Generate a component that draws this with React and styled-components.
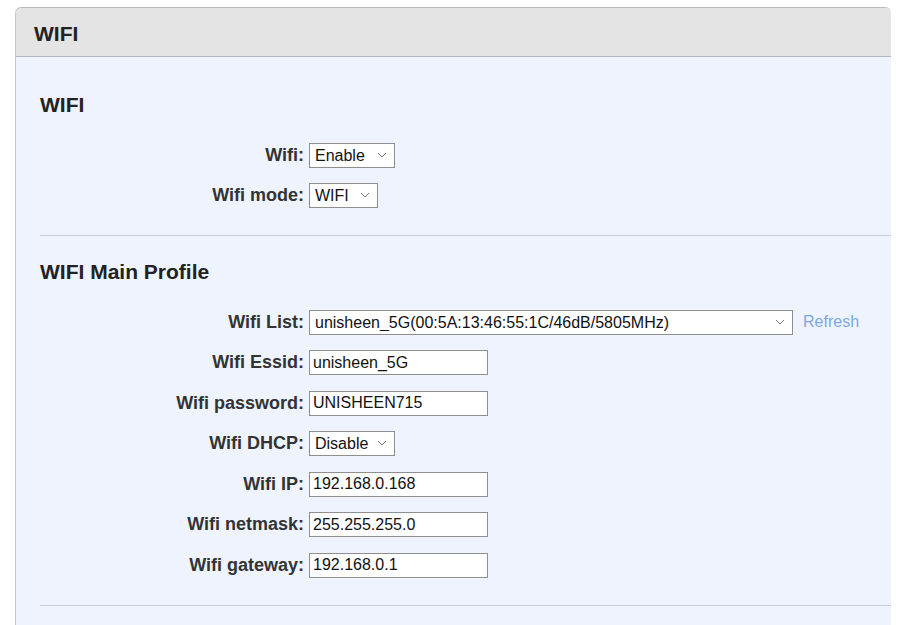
import React from 'react';
import styled, { createGlobalStyle } from 'styled-components';

const GlobalStyle = createGlobalStyle`
  html, body {
    margin: 0;
    padding: 0;
    background: #fff;
  }
  body {
    font-family: "Liberation Sans", Arial, sans-serif;
    color: #333;
    overflow: hidden;
  }
`;

const Page = styled.div`
  padding: 7px 26px 0 15px;
`;

const Panel = styled.div`
  border-top: 1px solid #b8bac4;
  border-left: 1px solid #c4c7d2;
  border-radius: 6px 6px 0 0;
  overflow: hidden;
  background: #eef3fe;
  height: 640px;
`;

const PanelHeader = styled.div`
  height: 49px;
  display: flex;
  align-items: center;
  padding: 3px 0 0 18px;
  box-sizing: border-box;
  background: #e4e4e4;
  border-bottom: 1px solid #b3b5c3;
  font-size: 21px;
  font-weight: bold;
  color: #222;
`;

const PanelBody = styled.div`
  padding: 12px 0 0 24px;
`;

const Section = styled.div`
  padding: 24px 0 19px;
  border-bottom: 1px solid #c9cdd8;
`;

const SectionTitle = styled.h3`
  margin: 0 0 18px;
  height: 24px;
  line-height: 24px;
  font-size: 21px;
  font-weight: bold;
  color: #222;
`;

const Row = styled.div`
  display: flex;
  align-items: center;
  height: 40.5px;
`;

const Label = styled.label`
  width: 264px;
  margin-right: 5px;
  text-align: right;
  font-size: 18px;
  font-weight: bold;
  color: #333;
  white-space: nowrap;
`;

const TextInput = styled.input`
  box-sizing: border-box;
  width: 179px;
  height: 25px;
  margin: 0;
  padding: 0 3px;
  border: 1px solid #8f8f8f;
  background: #fff;
  font-family: "Liberation Sans", Arial, sans-serif;
  font-size: 16px;
  color: #111;
  outline: none;
`;

const SelectWrap = styled.div`
  position: relative;
  width: ${p => p.$width}px;
  height: 25px;
`;

const Select = styled.select`
  box-sizing: border-box;
  width: 100%;
  height: 100%;
  margin: 0;
  padding: 0 18px 0 5px;
  appearance: none;
  border: 1px solid #8f8f8f;
  border-radius: 0;
  background: #fff;
  font-family: "Liberation Sans", Arial, sans-serif;
  font-size: 16px;
  color: #111;
  outline: none;
`;

const Chevron = styled.svg`
  position: absolute;
  right: 8px;
  top: 9px;
  pointer-events: none;
`;

const RefreshLink = styled.a`
  margin-left: 10px;
  font-size: 16px;
  color: #7fa7e2;
  text-decoration: none;
  cursor: pointer;
`;

function Dropdown({ width, value, options }) {
  return (
    <SelectWrap $width={width}>
      <Select defaultValue={value}>
        {options.map(o => <option key={o}>{o}</option>)}
      </Select>
      <Chevron width="10" height="6" viewBox="0 0 10 6">
        <path d="M1 1 L5 5 L9 1" fill="none" stroke="#777" strokeWidth="1" />
      </Chevron>
    </SelectWrap>
  );
}

function Field({ label, children }) {
  return (
    <Row>
      <Label>{label}</Label>
      {children}
    </Row>
  );
}

export default function App() {
  return (
    <Page>
      <GlobalStyle />
      <Panel>
        <PanelHeader>WIFI</PanelHeader>
        <PanelBody>
          <Section>
            <SectionTitle>WIFI</SectionTitle>
            <Field label="Wifi:">
              <Dropdown width={86} value="Enable" options={['Enable', 'Disable']} />
            </Field>
            <Field label="Wifi mode:">
              <Dropdown width={69} value="WIFI" options={['WIFI', 'AP']} />
            </Field>
          </Section>
          <Section>
            <SectionTitle>WIFI Main Profile</SectionTitle>
            <Field label="Wifi List:">
              <Dropdown
                width={484}
                value="unisheen_5G(00:5A:13:46:55:1C/46dB/5805MHz)"
                options={['unisheen_5G(00:5A:13:46:55:1C/46dB/5805MHz)']}
              />
              <RefreshLink>Refresh</RefreshLink>
            </Field>
            <Field label="Wifi Essid:">
              <TextInput defaultValue="unisheen_5G" />
            </Field>
            <Field label="Wifi password:">
              <TextInput defaultValue="UNISHEEN715" />
            </Field>
            <Field label="Wifi DHCP:">
              <Dropdown width={86} value="Disable" options={['Enable', 'Disable']} />
            </Field>
            <Field label="Wifi IP:">
              <TextInput defaultValue="192.168.0.168" />
            </Field>
            <Field label="Wifi netmask:">
              <TextInput defaultValue="255.255.255.0" />
            </Field>
            <Field label="Wifi gateway:">
              <TextInput defaultValue="192.168.0.1" />
            </Field>
          </Section>
        </PanelBody>
      </Panel>
    </Page>
  );
}
